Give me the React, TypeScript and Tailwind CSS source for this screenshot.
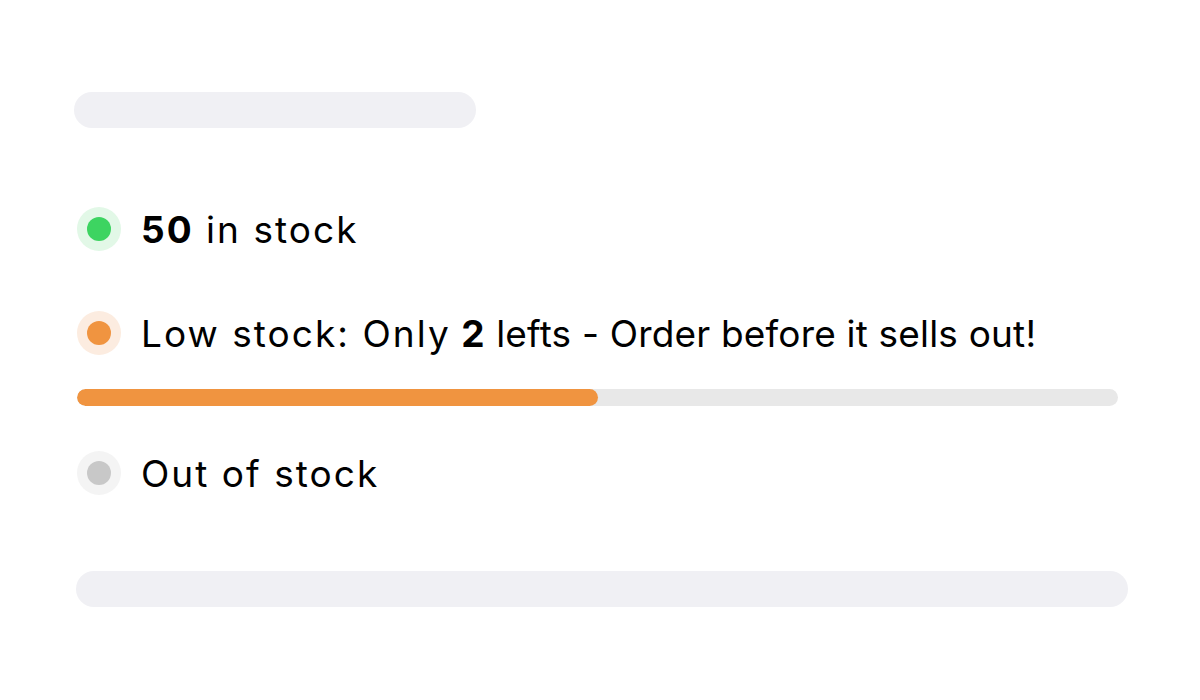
const rows = {
  green: { halo: "bg-[#e2f8e7]", dot: "bg-[#3dd461]" },
  orange: { halo: "bg-[#fcece0]", dot: "bg-[#f09440]" },
  gray: { halo: "bg-[#f4f4f4]", dot: "bg-[#c8c8c8]" },
};

function Dot({ tone }: { tone: keyof typeof rows }) {
  const c = rows[tone];
  return (
    <span className={`w-11 h-11 rounded-full ${c.halo} flex items-center justify-center shrink-0`}>
      <span className={`w-6 h-6 rounded-full ${c.dot}`} />
    </span>
  );
}

export default function App() {
  const filled = 50;
  return (
    <div className="w-[1200px] h-[700px] bg-white pl-[77px] flex flex-col font-['Inter',sans-serif] text-black">
      <div className="mt-[92px] -ml-[3px] w-[402px] h-9 rounded-full bg-[#f0f0f4]" />

      <div className="mt-[79px] flex items-center gap-5 h-11">
        <Dot tone="green" />
        <p className="text-[37px] leading-none tracking-[0.055em]">
          <span className="font-bold">50</span> in stock
        </p>
      </div>

      <div className="mt-[60px] flex items-center gap-5 h-11">
        <Dot tone="orange" />
        <p className="text-[37px] leading-none whitespace-nowrap">
          <span className="tracking-[0.055em]">Low stock: Only</span>{" "}
          <span className="font-bold tracking-[0.03em]">2</span>
          <span className="tracking-[0.005em]"> lefts - Order before it sells out!</span>
        </p>
      </div>

      <div className="mt-[34px] w-[1041px] h-[17px] rounded-full bg-[#e8e8e8] overflow-hidden">
        <div className="h-full rounded-full bg-[#f09440]" style={{ width: `${filled}%` }} />
      </div>

      <div className="mt-[45px] flex items-center gap-5 h-11">
        <Dot tone="gray" />
        <p className="text-[37px] leading-none tracking-[0.055em]">Out of stock</p>
      </div>

      <div className="mt-[76px] -ml-[1px] w-[1052px] h-9 rounded-full bg-[#f0f0f4]" />
    </div>
  );
}
